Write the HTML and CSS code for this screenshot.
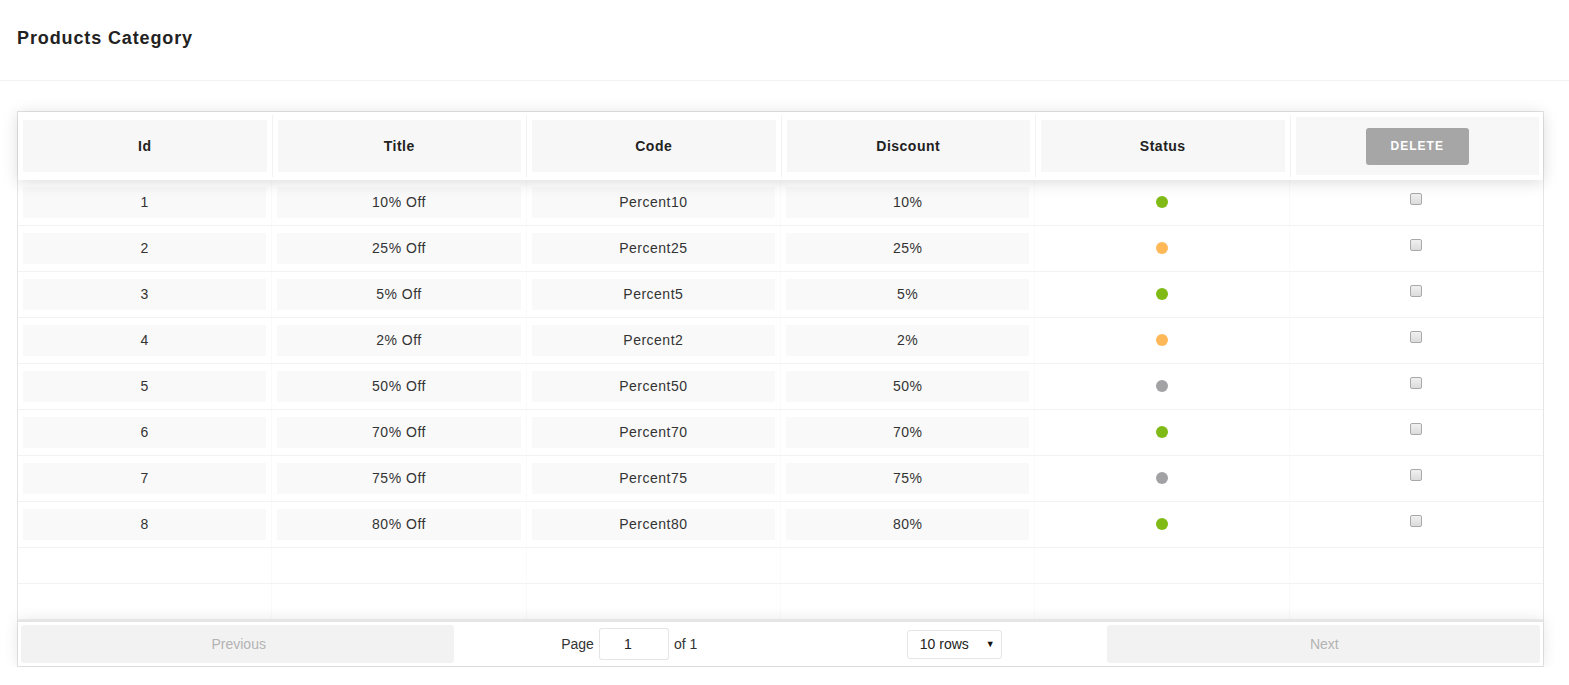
FILE: index.html
```html
<!DOCTYPE html>
<html>
<head>
<meta charset="utf-8">
<link rel="stylesheet" href="styles.css">
</head>
<body>
<header class="page-header">
  <h1 class="page-title">Products Category</h1>
</header>
<main class="content">
  <div class="rt-table">
    <div class="rt-thead">
      <div class="rt-th"><div class="th-inner">Id</div></div>
      <div class="rt-th"><div class="th-inner">Title</div></div>
      <div class="rt-th"><div class="th-inner">Code</div></div>
      <div class="rt-th"><div class="th-inner">Discount</div></div>
      <div class="rt-th"><div class="th-inner">Status</div></div>
      <div class="rt-th th-action"><div class="th-inner th-inner-action"><button class="btn-delete">DELETE</button></div></div>
    </div>
    <div class="rt-tbody">
      <div class="rt-tr"><div class="rt-td"><div class="td-inner">1</div></div><div class="rt-td"><div class="td-inner">10% Off</div></div><div class="rt-td"><div class="td-inner">Percent10</div></div><div class="rt-td"><div class="td-inner">10%</div></div><div class="rt-td"><div class="td-plain"><span class="dot dot-green"></span></div></div><div class="rt-td"><div class="td-check"><span class="check"></span></div></div></div>
      <div class="rt-tr"><div class="rt-td"><div class="td-inner">2</div></div><div class="rt-td"><div class="td-inner">25% Off</div></div><div class="rt-td"><div class="td-inner">Percent25</div></div><div class="rt-td"><div class="td-inner">25%</div></div><div class="rt-td"><div class="td-plain"><span class="dot dot-orange"></span></div></div><div class="rt-td"><div class="td-check"><span class="check"></span></div></div></div>
      <div class="rt-tr"><div class="rt-td"><div class="td-inner">3</div></div><div class="rt-td"><div class="td-inner">5% Off</div></div><div class="rt-td"><div class="td-inner">Percent5</div></div><div class="rt-td"><div class="td-inner">5%</div></div><div class="rt-td"><div class="td-plain"><span class="dot dot-green"></span></div></div><div class="rt-td"><div class="td-check"><span class="check"></span></div></div></div>
      <div class="rt-tr"><div class="rt-td"><div class="td-inner">4</div></div><div class="rt-td"><div class="td-inner">2% Off</div></div><div class="rt-td"><div class="td-inner">Percent2</div></div><div class="rt-td"><div class="td-inner">2%</div></div><div class="rt-td"><div class="td-plain"><span class="dot dot-orange"></span></div></div><div class="rt-td"><div class="td-check"><span class="check"></span></div></div></div>
      <div class="rt-tr"><div class="rt-td"><div class="td-inner">5</div></div><div class="rt-td"><div class="td-inner">50% Off</div></div><div class="rt-td"><div class="td-inner">Percent50</div></div><div class="rt-td"><div class="td-inner">50%</div></div><div class="rt-td"><div class="td-plain"><span class="dot dot-gray"></span></div></div><div class="rt-td"><div class="td-check"><span class="check"></span></div></div></div>
      <div class="rt-tr"><div class="rt-td"><div class="td-inner">6</div></div><div class="rt-td"><div class="td-inner">70% Off</div></div><div class="rt-td"><div class="td-inner">Percent70</div></div><div class="rt-td"><div class="td-inner">70%</div></div><div class="rt-td"><div class="td-plain"><span class="dot dot-green"></span></div></div><div class="rt-td"><div class="td-check"><span class="check"></span></div></div></div>
      <div class="rt-tr"><div class="rt-td"><div class="td-inner">7</div></div><div class="rt-td"><div class="td-inner">75% Off</div></div><div class="rt-td"><div class="td-inner">Percent75</div></div><div class="rt-td"><div class="td-inner">75%</div></div><div class="rt-td"><div class="td-plain"><span class="dot dot-gray"></span></div></div><div class="rt-td"><div class="td-check"><span class="check"></span></div></div></div>
      <div class="rt-tr"><div class="rt-td"><div class="td-inner">8</div></div><div class="rt-td"><div class="td-inner">80% Off</div></div><div class="rt-td"><div class="td-inner">Percent80</div></div><div class="rt-td"><div class="td-inner">80%</div></div><div class="rt-td"><div class="td-plain"><span class="dot dot-green"></span></div></div><div class="rt-td"><div class="td-check"><span class="check"></span></div></div></div>
      <div class="rt-tr rt-pad"><div class="rt-td"></div><div class="rt-td"></div><div class="rt-td"></div><div class="rt-td"></div><div class="rt-td"></div><div class="rt-td"></div></div>
      <div class="rt-tr rt-pad"><div class="rt-td"></div><div class="rt-td"></div><div class="rt-td"></div><div class="rt-td"></div><div class="rt-td"></div><div class="rt-td"></div></div>
    </div>
    <div class="pagination">
      <div class="pg-side"><button class="pg-btn" disabled>Previous</button></div>
      <div class="pg-center">
        <span class="page-info">Page <input class="page-jump" type="text" value="1"> of 1</span>
        <span class="select-wrap"><span class="select-text">10 rows</span><span class="select-arrow">▼</span></span>
      </div>
      <div class="pg-side"><button class="pg-btn" disabled>Next</button></div>
    </div>
  </div>
</main>
</body>
</html>
```

FILE: styles.css
```css
* { box-sizing: border-box; }
html, body { margin: 0; padding: 0; background: #fff; }
body {
  font-family: "Liberation Sans", Arial, sans-serif;
  font-size: 14px;
  color: #333;
}
.page-header {
  height: 81px;
  padding: 27px 17px 0;
  border-bottom: 1px solid #f2f2f2;
}
.page-title {
  margin: 0;
  font-size: 18px;
  line-height: 22px;
  font-weight: bold;
  letter-spacing: 0.88px;
  color: #222;
}
.content {
  padding: 30px 26px 0 17px;
}
.rt-table {
  width: 1527px;
  border: 1px solid rgba(0,0,0,0.1);
  display: flex;
  flex-direction: column;
  position: relative;
}
.rt-thead {
  display: flex;
  padding: 3px 0;
  box-shadow: 0 2px 15px 0 rgba(0,0,0,0.15);
  position: relative;
  z-index: 2;
  background: #fff;
}
.rt-th {
  flex: 1 1 0;
  min-width: 0;
  padding: 5px;
  border-right: 1px solid rgba(0,0,0,0.05);
  display: flex;
}
.rt-th:last-child { border-right: 0; }
.th-action { padding: 2px 4px 2px 5px; }
.th-inner {
  flex: 1;
  background: #f7f7f7;
  display: flex;
  align-items: center;
  justify-content: center;
  font-weight: bold;
  letter-spacing: 0.5px;
  color: #222;
  height: 52px;
}
.th-inner-action { height: 58px; }
.btn-delete {
  width: 103px;
  height: 37px;
  border: 0;
  border-radius: 3px;
  background: #a6a6a6;
  color: #fff;
  font-family: "Liberation Sans", Arial, sans-serif;
  font-size: 12px;
  font-weight: bold;
  letter-spacing: 1px;
  padding: 0 0 1px;
}
.rt-tbody {
  display: flex;
  flex-direction: column;
}
.rt-tr {
  display: flex;
  height: 46px;
  border-bottom: 1px solid rgba(0,0,0,0.05);
}
.rt-pad { height: 36px; }
.rt-td {
  flex: 1 1 0;
  min-width: 0;
  padding: 7px 5px;
  border-right: 1px solid rgba(0,0,0,0.02);
}
.rt-td:last-child { border-right: 0; }
.td-inner, .td-plain {
  height: 31px;
  padding-bottom: 2px;
  display: flex;
  align-items: center;
  justify-content: center;
  letter-spacing: 0.5px;
  color: #333;
}
.td-inner { background: #f9f9f9; }
.td-check {
  display: flex;
  justify-content: center;
  padding-top: 6px;
}
.dot {
  width: 12px;
  height: 12px;
  border-radius: 50%;
  display: block;
}
.dot-green { background: #80ba17; }
.dot-orange { background: #ffb858; }
.dot-gray { background: #a2a2a5; }
.check {
  display: block;
  width: 12px;
  height: 12px;
  border: 1px solid #a9a9a9;
  border-radius: 2px;
  background: linear-gradient(#f0f0f0, #dcdcdc);
}
.pagination {
  display: flex;
  align-items: stretch;
  padding: 3px;
  height: 46px;
  border-top: 2px solid rgba(0,0,0,0.1);
  box-shadow: 0 0 15px 0 rgba(0,0,0,0.1);
  position: relative;
  z-index: 1;
  background: #fff;
}
.pg-side { flex: 1 1 0; display: flex; }
.pg-btn {
  flex: 1;
  border: 0;
  border-radius: 3px;
  background: #f2f2f2;
  color: #b3b3b3;
  font-family: "Liberation Sans", Arial, sans-serif;
  font-size: 14px;
  padding: 0 0 0 2px;
}
.pg-center {
  flex: 1.5 1 0;
  display: flex;
  justify-content: space-around;
  align-items: center;
  color: #333;
  padding-left: 2px;
}
.page-info {
  display: flex;
  align-items: center;
  gap: 5px;
  white-space: nowrap;
}
.page-jump {
  width: 70px;
  height: 32px;
  border: 1px solid rgba(0,0,0,0.1);
  border-radius: 3px;
  text-align: center;
  font-family: "Liberation Sans", Arial, sans-serif;
  font-size: 14px;
  color: #222;
  padding: 0 14px 0 2px;
  outline: none;
}
.select-wrap {
  width: 95px;
  height: 29px;
  border: 1px solid rgba(0,0,0,0.1);
  border-radius: 3px;
  display: flex;
  align-items: center;
  justify-content: space-between;
  padding: 0 6px 0 12px;
  color: #222;
}
.select-arrow {
  font-size: 9px;
  color: #111;
}
```
